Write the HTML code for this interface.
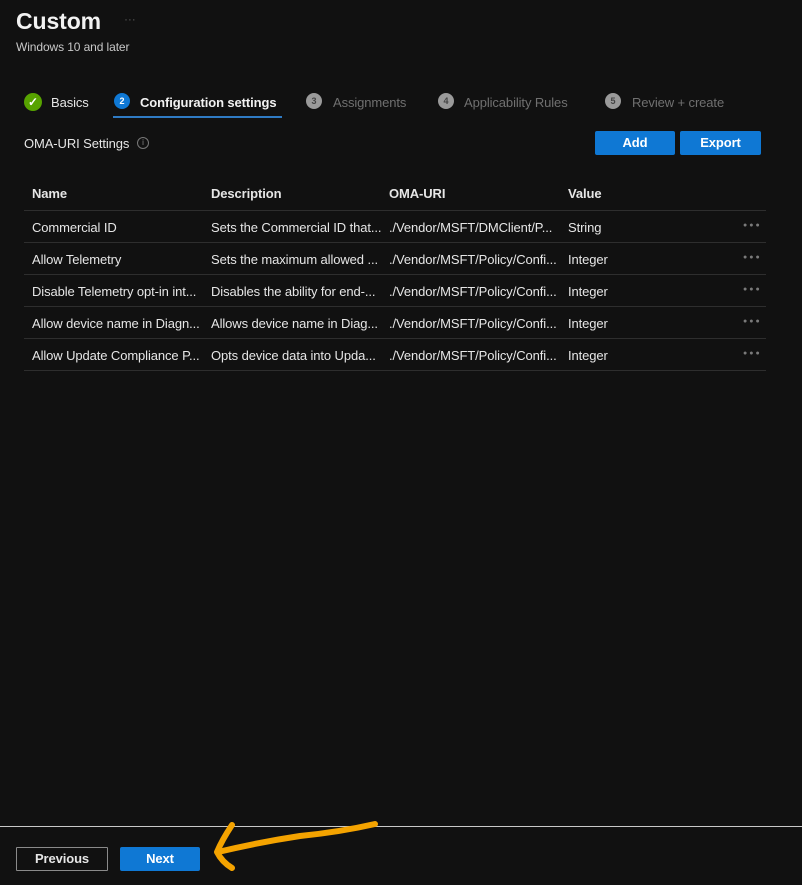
<!DOCTYPE html>
<html><head><style>
body{margin:0;width:802px;height:885px;background:#111111;font-family:"Liberation Sans",sans-serif;color:#e6e6e6;position:relative;overflow:hidden;font-size:13px;letter-spacing:-0.1px}
.a{position:absolute;white-space:nowrap}
.btn{position:absolute;background:#0f78d4;color:#fff;font-weight:bold;font-size:13px;text-align:center;border-radius:2px}
.circ{position:absolute;width:16px;height:16px;border-radius:50%;font-size:9px;text-align:center;line-height:16px;font-weight:bold}
.row{position:absolute;left:24px;width:742px;border-bottom:1px solid #2e2e2e;height:31px}
.row span{position:absolute;top:9px;white-space:nowrap}
.dots{position:absolute;color:#7a7a7a;letter-spacing:2px;font-size:7px}
</style></head><body>
<div class="a" style="left:16px;top:8px;font-size:23px;font-weight:bold;color:#f2f2f2">Custom</div>
<div class="a" style="left:124px;top:12px;color:#555;font-size:12px">···</div>
<div class="a" style="left:16px;top:40px;font-size:12px;color:#c8c8c8">Windows 10 and later</div>

<div class="circ" style="left:24px;top:93px;width:18px;height:18px;background:#57a300;color:#fff;line-height:18px;font-size:12px">✓</div>
<div class="a" style="left:51px;top:95px;color:#e6e6e6">Basics</div>
<div class="circ" style="left:114px;top:93px;background:#0f78d4;color:#fff">2</div>
<div class="a" style="left:140px;top:95px;font-weight:bold;color:#f2f2f2">Configuration settings</div>
<div class="a" style="left:113px;top:116px;width:169px;height:2px;background:#2f7bc4"></div>
<div class="circ" style="left:306px;top:93px;background:#9a9a9a;color:#444">3</div>
<div class="a" style="left:333px;top:95px;color:#707070">Assignments</div>
<div class="circ" style="left:438px;top:93px;background:#9a9a9a;color:#444">4</div>
<div class="a" style="left:464px;top:95px;color:#707070">Applicability Rules</div>
<div class="circ" style="left:605px;top:93px;background:#9a9a9a;color:#444">5</div>
<div class="a" style="left:632px;top:95px;color:#707070">Review + create</div>

<div class="a" style="left:24px;top:136px;color:#e6e6e6">OMA-URI Settings</div>
<div class="a" style="left:137px;top:137px;width:10px;height:10px;border:1px solid #777;border-radius:50%;font-size:8px;color:#888;text-align:center;line-height:10px">i</div>
<div class="btn" style="left:595px;top:131px;width:80px;height:24px;line-height:24px">Add</div>
<div class="btn" style="left:680px;top:131px;width:81px;height:24px;line-height:24px">Export</div>

<div class="row" style="top:179px;font-weight:bold"><span style="left:8px;top:7px">Name</span><span style="left:187px;top:7px">Description</span><span style="left:365px;top:7px">OMA-URI</span><span style="left:544px;top:7px">Value</span></div>
<div class="row" style="top:211px"><span style="left:8px">Commercial ID</span><span style="left:187px">Sets the Commercial ID that...</span><span style="left:365px">./Vendor/MSFT/DMClient/P...</span><span style="left:544px">String</span><span class="dots" style="left:719px;top:11px">●●●</span></div>
<div class="row" style="top:243px"><span style="left:8px">Allow Telemetry</span><span style="left:187px">Sets the maximum allowed ...</span><span style="left:365px">./Vendor/MSFT/Policy/Confi...</span><span style="left:544px">Integer</span><span class="dots" style="left:719px;top:11px">●●●</span></div>
<div class="row" style="top:275px"><span style="left:8px">Disable Telemetry opt-in int...</span><span style="left:187px">Disables the ability for end-...</span><span style="left:365px">./Vendor/MSFT/Policy/Confi...</span><span style="left:544px">Integer</span><span class="dots" style="left:719px;top:11px">●●●</span></div>
<div class="row" style="top:307px"><span style="left:8px">Allow device name in Diagn...</span><span style="left:187px">Allows device name in Diag...</span><span style="left:365px">./Vendor/MSFT/Policy/Confi...</span><span style="left:544px">Integer</span><span class="dots" style="left:719px;top:11px">●●●</span></div>
<div class="row" style="top:339px"><span style="left:8px">Allow Update Compliance P...</span><span style="left:187px">Opts device data into Upda...</span><span style="left:365px">./Vendor/MSFT/Policy/Confi...</span><span style="left:544px">Integer</span><span class="dots" style="left:719px;top:11px">●●●</span></div>

<div class="a" style="left:0;top:826px;width:802px;height:1px;background:#c8c8c8"></div>
<div class="a" style="left:16px;top:847px;width:90px;height:22px;border:1px solid #8a8a8a;color:#e6e6e6;font-weight:bold;text-align:center;line-height:22px;border-radius:1px">Previous</div>
<div class="btn" style="left:120px;top:847px;width:80px;height:24px;line-height:24px">Next</div>
<svg class="a" style="left:0;top:0" width="802" height="885"><path d="M375 824 Q340 832 300 836 Q260 842 218 852 M232 825 Q222 840 217 852 Q222 862 232 868" fill="none" stroke="#f4a300" stroke-width="6" stroke-linecap="round" stroke-linejoin="round"/></svg>
</body></html>
